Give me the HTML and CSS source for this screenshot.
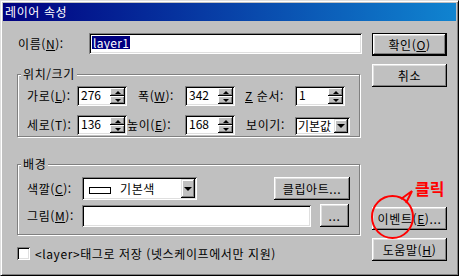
FILE: index.html
```html
<!DOCTYPE html>
<html lang="ko">
<head>
<meta charset="utf-8">
<title>레이어 속성</title>
<link rel="stylesheet" href="styles.css">
</head>
<body>
<div class="window">
  <div class="titlebar"><span class="title">레이어 속성</span></div>
  <div class="body">
    <div class="main">
      <div class="name-row">
        <span class="lbl name-lbl">이름(<u>N</u>):</span>
        <div class="sunken name-field"><span class="sel">layer1</span></div>
      </div>

      <div class="group g1">
        <span class="legend">위치/크기</span>
        <div class="g1-grid">
          <span class="lbl">가로(<u>L</u>):</span>
          <div class="sunken spin"><span class="val">276</span><div class="spinbtns"><span class="sb"><i class="up"></i></span><span class="sb"><i class="down"></i></span></div></div>
          <span class="lbl l-w">폭(<u>W</u>):</span>
          <div class="sunken spin"><span class="val">342</span><div class="spinbtns"><span class="sb"><i class="up"></i></span><span class="sb"><i class="down"></i></span></div></div>
          <span class="lbl l-z"><u>Z</u> 순서:</span>
          <div class="sunken spin"><span class="val">1</span><div class="spinbtns"><span class="sb"><i class="up"></i></span><span class="sb"><i class="down"></i></span></div></div>

          <span class="lbl">세로(T):</span>
          <div class="sunken spin"><span class="val">136</span><div class="spinbtns"><span class="sb"><i class="up"></i></span><span class="sb"><i class="down"></i></span></div></div>
          <span class="lbl l-h">높이(<u>E</u>):</span>
          <div class="sunken spin"><span class="val">168</span><div class="spinbtns"><span class="sb"><i class="up"></i></span><span class="sb"><i class="down"></i></span></div></div>
          <span class="lbl l-v">보이기:</span>
          <div class="sunken combo small"><span class="val">기본값</span><span class="dropbtn"><i class="down big"></i></span></div>
        </div>
      </div>

      <div class="group g2">
        <span class="legend">배경</span>
        <div class="g2-row">
          <span class="lbl l2">색깔(<u>C</u>):</span>
          <div class="sunken combo color"><span class="swatch"></span><span class="val">기본색</span><span class="dropbtn"><i class="down big"></i></span></div>
          <button class="btn clip">클립아트...</button>
        </div>
        <div class="g2-row r2">
          <span class="lbl l2">그림(<u>M</u>):</span>
          <div class="sunken pic"></div>
          <button class="btn dots">...</button>
        </div>
      </div>

      <div class="check-row">
        <span class="sunken checkbox"></span>
        <span class="lbl">&lt;layer&gt;태그로 저장 (넷스케이프에서만 지원)</span>
      </div>
    </div>

    <div class="side">
      <button class="btn default">확인(<u>O</u>)</button>
      <button class="btn cancel">취소</button>
      <button class="btn event">이벤트(<u>E</u>)...</button>
      <button class="btn help">도움말(<u>H</u>)</button>
    </div>
  </div>

  <svg class="annot" width="459" height="276" viewBox="0 0 459 276">
    <ellipse cx="392.5" cy="217" rx="20.5" ry="21" fill="none" stroke="#ff0000" stroke-width="2"/>
    <path d="M401 199 L412 191 L406 203" fill="none" stroke="#ff0000" stroke-width="2" stroke-linejoin="miter"/>
  </svg>
  <span class="click">클릭</span>
</div>
</body>
</html>
```
FILE: styles.css
```css
* { box-sizing: border-box; }
html, body { margin: 0; padding: 0; background: #c0c0c0; }
body {
  font-family: "Noto Sans CJK KR", "DejaVu Sans", sans-serif;
  font-size: 12px;
  line-height: 14px;
  letter-spacing: 0.6px;
  color: #000;
}
u { text-decoration: underline; text-underline-offset: 1px; }

.window {
  position: relative;
  width: 459px;
  height: 276px;
  background: #c0c0c0;
  border: 1px solid;
  border-color: #dfdfdf #000 #000 #dfdfdf;
  box-shadow: inset 1px 1px #fff, inset -1px -1px #808080;
  padding: 2px;
}

.titlebar {
  height: 18px;
  background: linear-gradient(to right, #000080, #1084d0);
  display: flex;
  align-items: center;
  padding-left: 2px;
}
.title { color: #fff; font-size: 12px; line-height: 14px; }

.body {
  display: flex;
  padding: 12px 0 0 14px;
}
.main { width: 345px; display: flex; flex-direction: column; }

.lbl { white-space: nowrap; }

.sunken {
  background: #fff;
  box-shadow: inset 1px 1px #808080, inset -1px -1px #fff, inset 2px 2px #000, inset -2px -2px #dfdfdf;
}

.name-row { display: flex; align-items: center; height: 21px; }
.name-lbl { width: 72px; padding-left: 1px; }
.name-field { width: 273px; height: 21px; padding: 3px 0 0 3px; }
.sel { background: #000080; color: #fff; padding: 0 1px; display: inline-block; line-height: 13px; letter-spacing: 0.3px; }

.group {
  position: relative;
  border: 1px solid #808080;
  box-shadow: inset 1px 1px #fff, 1px 1px #fff;
  width: 343px;
}
.legend {
  position: absolute;
  top: -8px;
  left: 3px;
  padding: 0 2px;
  background: #c0c0c0;
  line-height: 14px;
}

.g1 { margin-top: 20px; height: 63px; padding: 11px 0 0 9px; }
.g1-grid {
  display: grid;
  grid-template-columns: 50px 50px 58px 50px 60px auto;
  grid-template-rows: 20px 20px;
  row-gap: 9px;
  align-items: center;
}
.l-w { padding-left: 11px; }
.l-h { margin-left: 0; }
.l-z { padding-left: 10px; }
.l-v { padding-left: 11px; }

.spin { width: 50px; height: 20px; display: flex; padding: 2px; }
.spin .val { flex: 1; padding: 0 0 0 2px; line-height: 13px; letter-spacing: 0; }
.spinbtns { width: 15px; display: flex; flex-direction: column; }
.sb {
  flex: 1;
  background: #c0c0c0;
  box-shadow: inset -1px -1px #000, inset 1px 1px #fff, inset -2px -2px #808080;
  display: flex;
  align-items: center;
  justify-content: center;
}
i.up { width: 0; height: 0; border-left: 3px solid transparent; border-right: 3px solid transparent; border-bottom: 3px solid #000; }
i.down { width: 0; height: 0; border-left: 3px solid transparent; border-right: 3px solid transparent; border-top: 3px solid #000; }
i.down.big { border-left-width: 4px; border-right-width: 4px; border-top-width: 4px; }

.combo { display: flex; align-items: stretch; padding: 2px; }
.combo .val { flex: 1; line-height: 14px; letter-spacing: 0; }
.combo.small { width: 55px; height: 18px; margin-top: 2px; }
.combo.small .val { padding-left: 1px; }
.dropbtn {
  width: 14px;
  background: #c0c0c0;
  box-shadow: inset -1px -1px #000, inset 1px 1px #dfdfdf, inset -2px -2px #808080, inset 2px 2px #fff;
  display: flex;
  align-items: center;
  justify-content: center;
}

.g2 { margin-top: 27px; height: 71px; padding: 12px 0 0 9px; }
.g2-row { display: flex; align-items: center; height: 23px; }
.g2-row.r2 { margin-top: 4px; }
.l2 { width: 55px; }
.combo.color { width: 115px; height: 23px; }
.combo.color .val { padding: 3px 0 0 9px; letter-spacing: 0.6px; }
.swatch { width: 22px; height: 7px; border: 1px solid #000; align-self: center; margin: 4px 0 0 5px; }
.pic { width: 229px; height: 22px; }

.btn {
  font: inherit;
  letter-spacing: inherit;
  color: #000;
  background: #c0c0c0;
  border: none;
  padding: 0;
  height: 23px;
  box-shadow: inset -1px -1px #000, inset 1px 1px #fff, inset -2px -2px #808080, inset 2px 2px #dfdfdf;
}
.clip { width: 76px; margin-left: 77px; }
.dots { width: 29px; margin-left: 9px; }

.check-row { display: flex; align-items: center; margin-top: 12px; height: 13px; }
.checkbox { width: 13px; height: 13px; margin-right: 5px; }

.side { margin-left: 10px; width: 75px; display: flex; flex-direction: column; }
.side .btn { width: 75px; }
.btn.default {
  border: 1px solid #000;
  box-shadow: inset -1px -1px #000, inset 1px 1px #fff, inset -2px -2px #808080, inset 2px 2px #dfdfdf;
}
.cancel { margin-top: 8px; }
.event { margin-top: 120px; }
.help { margin-top: 8px; }

.annot { position: absolute; left: -1px; top: -1px; pointer-events: none; }
.click {
  position: absolute;
  left: 414px;
  top: 178px;
  color: #ff0000;
  font-weight: bold;
  font-size: 16px;
  line-height: 19px;
  letter-spacing: 0;
}
```
